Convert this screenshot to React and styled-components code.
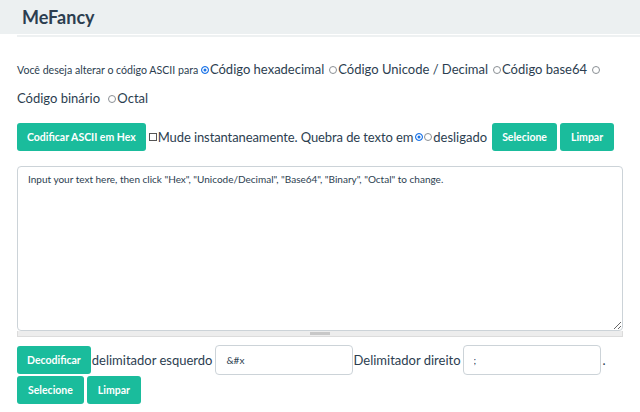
import React from "react";
import styled, { createGlobalStyle } from "styled-components";

const Global = createGlobalStyle`
  html, body { margin: 0; padding: 0; background: #fff; }
  body { font-family: Lato, "Noto Sans", sans-serif; color: #2c3e50; }
  * { box-sizing: border-box; }
`;

const Header = styled.header`
  height: 34px;
  background: #ecf0f1;
  display: flex;
  align-items: center;
  padding-left: 22px;
`;

const Title = styled.h1`
  margin: 0;
  font-size: 18px;
  font-weight: 700;
  color: #2c3e50;
`;

const Rule = styled.div`
  margin: 1px 0 0 17px;
  height: 2px;
  background: #eef1f2;
`;

const Main = styled.main`
  padding: 0 17px;
`;

const Options = styled.p`
  margin: 18px 0 0;
  font-size: 13px;
  line-height: 28px;
  color: #2c3e50;
`;

const Small = styled.span`
  font-size: 10.6px;
`;

const Radio = styled.span`
  display: inline-block;
  width: 8px;
  height: 8px;
  border-radius: 50%;
  border: 1px solid ${(p) => (p.$checked ? "#1a73e8" : "#8a8f94")};
  background: ${(p) => (p.$checked ? "#1a73e8" : "#fff")};
  box-shadow: ${(p) => (p.$checked ? "inset 0 0 0 1.5px #fff" : "none")};
  margin: 0 1px 0 ${(p) => p.$ml || 0}px;
  vertical-align: 0px;
`;

const Check = styled.span`
  display: inline-block;
  width: 8px;
  height: 8px;
  border: 1px solid #555;
  margin: 0 1px 0 3px;
`;

const Row = styled.div`
  display: flex;
  align-items: center;
  flex-wrap: wrap;
  row-gap: 1px;
  font-size: 13px;
  margin-top: ${(p) => p.$mt || 0}px;
`;

const Button = styled.button`
  height: 28px;
  padding: 0 ${(p) => p.$px || 10}px;
  border: none;
  border-radius: 3px;
  background: #1abc9c;
  color: #fff;
  font-family: Lato, "Noto Sans", sans-serif;
  font-weight: 700;
  font-size: 10.5px;
  margin-right: ${(p) => p.$mr || 0}px;
  margin-left: ${(p) => p.$ml || 0}px;
  cursor: pointer;
`;

const Label = styled.span`
  font-size: 13px;
  letter-spacing: ${(p) => p.$ls || 0}px;
  margin-right: ${(p) => p.$mr || 0}px;
`;

const Box = styled.div`
  margin-top: 15px;
  width: 606px;
`;

const Area = styled.textarea`
  display: block;
  width: 606px;
  height: 165px;
  border: 1px solid #ccd3d8;
  border-radius: 4px;
  padding: 6px 10px;
  font-family: Lato, "Noto Sans", sans-serif;
  font-size: 10px;
  color: #2c3e50;
  resize: both;
  overflow: hidden;
  white-space: pre;
  outline: none;
`;

const ScrollTrack = styled.div`
  height: 6px;
  background: #ededed;
  border: 1px solid #dcdcdc;
  border-top: none;
  display: flex;
  justify-content: center;
  align-items: center;
`;

const Thumb = styled.div`
  width: 20px;
  height: 3px;
  background: #c8c8c8;
`;

const Input = styled.input`
  width: 138px;
  height: 30px;
  border: 1px solid #ccd3d8;
  border-radius: 4px;
  padding: 0 10px;
  font-family: Lato, "Noto Sans", sans-serif;
  font-size: 10px;
  color: #2c3e50;
  margin: 0 ${(p) => p.$mr || 0}px 0 ${(p) => p.$ml || 0}px;
  outline: none;
`;

export default function App() {
  return (
    <>
      <Global />
      <Header>
        <Title>MeFancy</Title>
      </Header>
      <Rule />
      <Main>
        <Options>
          <Small>Você deseja alterar o código ASCII para </Small>
          <Radio $checked />Código hexadecimal
          <Radio $ml={5} />Código Unicode / Decimal
          <Radio $ml={5} />Código base64
          <Radio $ml={5} />
          <br />
          Código binário <Radio $ml={5} />Octal
        </Options>
        <Row $mt={11}>
          <Button $px={10}>Codificar ASCII em Hex</Button>
          <Check />
          <Label $ls={-0.1}>Mude instantaneamente. Quebra de texto em </Label>
          <Radio $checked $ml={2} />
          <Radio />
          <Label $mr={5}>desligado</Label>
          <Button $px={10} $mr={3}>Selecione</Button>
          <Button $px={11}>Limpar</Button>
        </Row>
        <Box>
          <Area
            readOnly
            wrap="off"
            defaultValue={'Input your text here, then click "Hex", "Unicode/Decimal", "Base64", "Binary", "Octal" to change.'}
          />
          <ScrollTrack>
            <Thumb />
          </ScrollTrack>
        </Box>
        <Row $mt={8}>
          <Button $px={10} $mr={1}>Decodificar</Button>
          <Label $mr={3}>delimitador esquerdo</Label>
          <Input readOnly defaultValue="&#x" />
          <Label $mr={2}>Delimitador direito</Label>
          <Input readOnly defaultValue=";" $mr={2} />
          <Label>.</Label>
          <Button $px={11} $mr={3}>Selecione</Button>
          <Button $px={11}>Limpar</Button>
        </Row>
      </Main>
    </>
  );
}
